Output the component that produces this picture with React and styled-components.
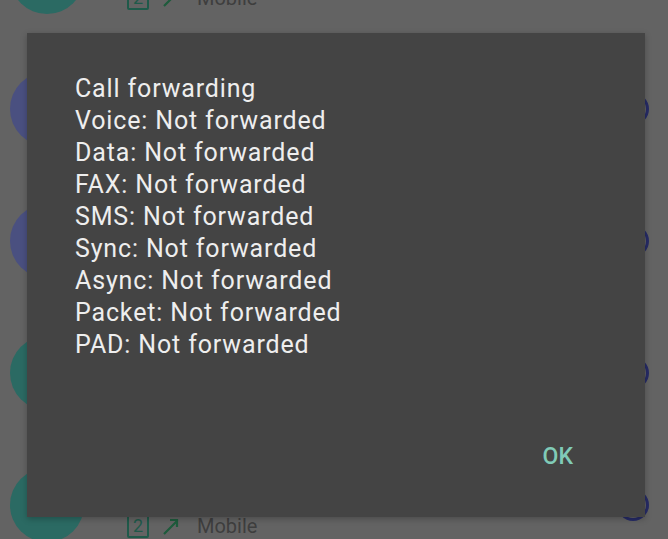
import React from "react";
import styled, { createGlobalStyle } from "styled-components";

const GlobalStyle = createGlobalStyle`
  html, body { margin: 0; padding: 0; background: #636363; overflow: hidden; }
  body { font-family: Roboto, "Noto Sans", Arial, sans-serif; }
`;

const Screen = styled.div`
  position: relative;
  width: 668px;
  height: 539px;
  overflow: hidden;
  background: #636363;
`;

const List = styled.div`
  display: flex;
  flex-direction: column;
  margin-top: -89px;
`;

const Row = styled.div`
  height: 132px;
  display: flex;
  align-items: center;
  padding: 0 19px 0 10px;
  box-sizing: border-box;
`;

const Avatar = styled.div`
  width: 74px;
  height: 74px;
  border-radius: 50%;
  flex: none;
  background: ${(p) => (p.$tone === "blue" ? "#4a5080" : "#2b6a63")};
`;

const Content = styled.div`
  flex: 1;
  display: flex;
  flex-direction: column;
  justify-content: flex-end;
  align-self: stretch;
  margin-left: 43px;
  padding-bottom: 33px;
`;

const Detail = styled.div`
  display: flex;
  align-items: center;
  height: 24px;
  gap: 12px;
`;

const SimBox = styled.div`
  width: 18px;
  height: 20px;
  border: 2px solid #1f5a4a;
  border-radius: 2px;
  color: #1f5a4a;
  font-size: 18px;
  line-height: 20px;
  text-align: center;
`;

const Label = styled.span`
  font-size: 20px;
  color: #3e3e3e;
  margin-left: 4px;
`;

const Ring = styled.div`
  width: 26px;
  height: 26px;
  border: 3px solid #262b66;
  border-radius: 50%;
  flex: none;
`;

const Dialog = styled.div`
  position: absolute;
  left: 27px;
  top: 33px;
  width: 618px;
  height: 484px;
  background: #444444;
  display: flex;
  flex-direction: column;
  box-shadow: 0 2px 6px rgba(0, 0, 0, 0.25);
`;

const Body = styled.div`
  flex: 1;
  padding: 40px 0 0 48px;
  color: #eeeeee;
  font-size: 25px;
  letter-spacing: 0.85px;
  line-height: 32px;
`;

const Line = styled.div``;

const Footer = styled.div`
  display: flex;
  justify-content: flex-end;
  padding: 0 56px 44px 0;
`;

const Button = styled.button`
  background: none;
  border: none;
  padding: 0 16px;
  height: 32px;
  font-family: Roboto, sans-serif;
  font-weight: 500;
  font-size: 23px;
  line-height: 32px;
  color: #80cbb7;
`;

const ArrowIcon = () => (
  <svg width="20" height="20" viewBox="0 0 20 20">
    <path d="M3 18 L16 5 M9 4 H16 V11" stroke="#1e5b3c" strokeWidth="2.2" fill="none" />
  </svg>
);

const rows = [
  { tone: "teal", shown: true },
  { tone: "blue", shown: false },
  { tone: "blue", shown: false },
  { tone: "teal", shown: false },
  { tone: "teal", shown: true },
];

const lines = [
  "Call forwarding",
  "Voice: Not forwarded",
  "Data: Not forwarded",
  "FAX: Not forwarded",
  "SMS: Not forwarded",
  "Sync: Not forwarded",
  "Async: Not forwarded",
  "Packet: Not forwarded",
  "PAD: Not forwarded",
];

export default function App() {
  return (
    <>
      <GlobalStyle />
      <Screen>
        <List>
          {rows.map((r, i) => (
            <Row key={i}>
              <Avatar $tone={r.tone} />
              <Content>
                {r.shown && (
                  <Detail>
                    <SimBox>2</SimBox>
                    <ArrowIcon />
                    <Label>Mobile</Label>
                  </Detail>
                )}
              </Content>
              <Ring />
            </Row>
          ))}
        </List>
        <Dialog>
          <Body>
            {lines.map((l) => (
              <Line key={l}>{l}</Line>
            ))}
          </Body>
          <Footer>
            <Button>OK</Button>
          </Footer>
        </Dialog>
      </Screen>
    </>
  );
}
